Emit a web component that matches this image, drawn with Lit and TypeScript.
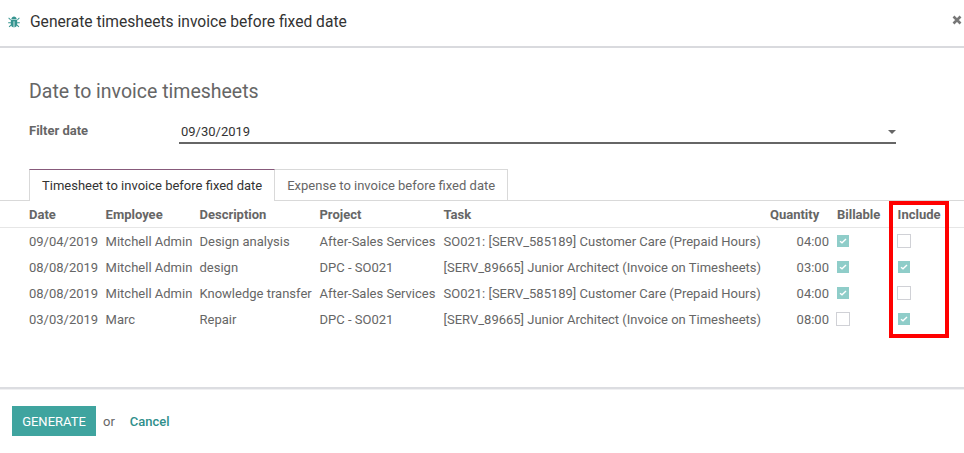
import { LitElement, html, css, svg } from "lit";
import { customElement } from "lit/decorators.js";

const rows = [
  ["09/04/2019", "Mitchell Admin", "Design analysis", "After-Sales Services", "SO021: [SERV_585189] Customer Care (Prepaid Hours)", "04:00", true, false],
  ["08/08/2019", "Mitchell Admin", "design", "DPC - SO021", "[SERV_89665] Junior Architect (Invoice on Timesheets)", "03:00", true, true],
  ["08/08/2019", "Mitchell Admin", "Knowledge transfer", "After-Sales Services", "SO021: [SERV_585189] Customer Care (Prepaid Hours)", "04:00", true, false],
  ["03/03/2019", "Marc", "Repair", "DPC - SO021", "[SERV_89665] Junior Architect (Invoice on Timesheets)", "08:00", false, true],
] as const;

const bug = svg`<svg width="12" height="12" viewBox="0 0 12 12" fill="#35948f"><path d="M3.300 3.200C3.500 1.500 4.700.6 6 .6s2.500.9 2.700 2.600z"/><path d="M2.800 3.800h6.400v4.300c0 1.900-1.400 3.300-2.800 3.400V5.200h-.8v6.300C4.200 11.400 2.800 10 2.800 8.100z"/><path d="M.9 1.600l2 2-.6.700-2-2zM11.100 1.600l-2 2 .6.700 2-2zM.2 6.200h2.700v1H.2zM9.100 6.200h2.700v1H9.100zM2.900 8.600l.5.800-2 1.800-.7-.8zM9.100 8.600l-.5.800 2 1.800.7-.8z"/></svg>`;

@customElement("app-root")
export class AppRoot extends LitElement {
  static styles = css`
    :host { display: block; position: relative; width: 964px; height: 453px; background: #fff; font-family: Roboto, sans-serif; font-size: 13px; color: #666; overflow: hidden; }
    .modal-head { height: 46px; box-sizing: border-box; display: flex; align-items: center; padding: 0 2px 3px 8px; color: #333; font-size: 15.6px; }
    .bug { display: flex; width: 12px; margin-right: 10px; }
    .title { flex: 1; }
    .close { display: flex; width: 10px; height: 10px; margin-top: -3px; }
    .rule { height: 2px; background: #d9dade; }
    .sheet { height: 339px; box-sizing: border-box; padding-top: 32px; }
    h2 { margin: 0 0 0 29px; font-weight: 400; font-size: 19.5px; line-height: 24px; color: #666; }
    .filter { display: flex; margin: 16px 68px 0 29px; height: 28px; align-items: flex-start; }
    .filter label { width: 150px; font-weight: 700; font-size: 13px; line-height: 15px; color: #666; padding-top: 3px; }
    .input { flex: 1; height: 24px; box-sizing: border-box; border-bottom: 2px solid #666; color: #333; line-height: 16px; padding: 4px 0 0 2px; font-size: 13px; position: relative; }
    .caret { position: absolute; right: 0; top: 10px; width: 0; height: 0; border: 4px solid transparent; border-top: 4px solid #666; border-bottom: 0; }
    .tabs { display: flex; margin-top: 21px; padding-left: 29px; height: 31px; border-bottom: 1px solid #d9d9d9; }
    .tab { height: 31px; box-sizing: border-box; padding: 8px 12px 0; line-height: 16px; color: #666; border: 1px solid #d9d9d9; border-left: 0; border-bottom: 0; }
    .tab.on { color: #333; background: #fff; height: 32px; border: 1px solid #d9d9d9; border-top-color: #875a7b; border-bottom: 0; }
    table { border-collapse: collapse; width: 964px; table-layout: fixed; }
    th { font-weight: 700; text-align: left; height: 26px; padding: 0; border-bottom: 1px solid #e6e6e6; color: #666; white-space: nowrap; }
    td { height: 26px; padding: 0; white-space: nowrap; color: #666; }
    .first { padding-left: 29px; }
    th.qty { text-align: right; padding-right: 18px; }
    td.qty { text-align: right; padding-right: 8px; }
    .cb { width: 12px; height: 12px; box-sizing: border-box; background: #8fcdc9; display: flex; align-items: center; justify-content: center; }
    .cb.off { width: 14px; height: 14px; background: #fff; border: 1px solid #d0d1d6; margin-left: -1px; }
    .inc { padding-left: 1px; }
    th.inc { padding-left: 0.6px; }
    .footer-rule { height: 2px; background: #dcdde1; border-bottom: 1px solid #f0f0f2; }
    .foot { display: flex; align-items: center; padding: 16px 12px 0; }
    .btn { background: #3fa49f; color: #fff; height: 30px; width: 84px; display: flex; align-items: center; justify-content: center; font-size: 13px; }
    .or { margin-left: 7px; color: #666; }
    .cancel { margin-left: 15px; color: #2f8f8b; font-weight: 500; }
    .marker { position: absolute; left: 889px; top: 201px; width: 60px; height: 137px; box-sizing: border-box; border: 4px solid #f00; pointer-events: none; }
  `;

  check(on: boolean) {
    return html`<span class="cb ${on ? "" : "off"}">${on
      ? html`<svg width="8" height="6" viewBox="0 0 8 6"><path d="M1 3.200l2 1.600L7 1" fill="none" stroke="#fff" stroke-width="1.400"/></svg>`
      : ""}</span>`;
  }

  render() {
    return html`
      <div class="modal-head"><span class="bug">${bug}</span><span class="title">Generate timesheets invoice before fixed date</span>
        <span class="close"><svg width="10" height="10" viewBox="0 0 10 10"><path d="M1.500 1.500l7 7M8.500 1.500l-7 7" stroke="#777" stroke-width="2.600" fill="none"/></svg></span></div>
      <div class="rule"></div>
      <div class="sheet">
        <h2>Date to invoice timesheets</h2>
        <div class="filter"><label>Filter date</label><div class="input">09/30/2019<span class="caret"></span></div></div>
        <div class="tabs"><div class="tab on">Timesheet to invoice before fixed date</div><div class="tab">Expense to invoice before fixed date</div></div>
        <table>
          <colgroup><col style="width:105.6px"><col style="width:93.9px"><col style="width:120px"><col style="width:124px"><col style="width:326.500px"><col style="width:67px"><col style="width:60px"><col style="width:67px"></colgroup>
          <thead><tr><th class="first">Date</th><th>Employee</th><th>Description</th><th>Project</th><th>Task</th><th class="qty">Quantity</th><th>Billable</th><th class="inc">Include</th></tr></thead>
          <tbody>${rows.map((r) => html`<tr>
            <td class="first">${r[0]}</td><td>${r[1]}</td><td>${r[2]}</td><td>${r[3]}</td><td>${r[4]}</td><td class="qty">${r[5]}</td>
            <td>${this.check(r[6])}</td><td class="inc">${this.check(r[7])}</td></tr>`)}</tbody>
        </table>
      </div>
      <div class="footer-rule"></div>
      <div class="foot"><div class="btn">GENERATE</div><span class="or">or</span><span class="cancel">Cancel</span></div>
      <div class="marker"></div>
    `;
  }
}
